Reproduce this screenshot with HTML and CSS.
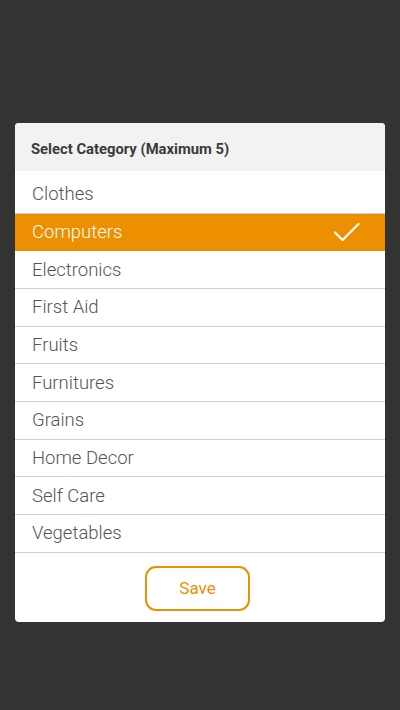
FILE: index.html
```html
<!DOCTYPE html>
<html>
<head>
<meta charset="utf-8">
<link rel="stylesheet" href="styles.css">
</head>
<body>
<div class="screen">
  <div class="dialog">
    <div class="header">Select Category (Maximum 5)</div>
    <ul class="list">
      <li class="item">Clothes</li>
      <li class="item selected">Computers
        <svg class="check" width="26" height="20" viewBox="0 0 26 20"><path d="M1 10.5 L8.5 18 L24.5 2" fill="none" stroke="#fff" stroke-width="2.2" stroke-linecap="round" stroke-linejoin="round"/></svg>
      </li>
      <li class="item">Electronics</li>
      <li class="item">First Aid</li>
      <li class="item">Fruits</li>
      <li class="item">Furnitures</li>
      <li class="item">Grains</li>
      <li class="item">Home Decor</li>
      <li class="item">Self Care</li>
      <li class="item">Vegetables</li>
    </ul>
    <div class="footer">
      <button class="save">Save</button>
    </div>
  </div>
</div>
</body>
</html>
```
FILE: styles.css
```css
html, body {
  margin: 0;
  padding: 0;
  background: #333333;
  font-family: Roboto, "Liberation Sans", sans-serif;
}
.screen {
  width: 400px;
  height: 710px;
  display: flex;
  flex-direction: column;
  align-items: center;
  padding-top: 123px;
  box-sizing: border-box;
}
.dialog {
  width: 370px;
  background: #ffffff;
  border-radius: 4px;
  overflow: hidden;
}
.header {
  background: #f2f2f2;
  height: 48px;
  box-sizing: border-box;
  padding-top: 3px;
  display: flex;
  align-items: center;
  padding-left: 16px;
  font-size: 14.8px;
  font-weight: 700;
  color: #3a3a3a;
}
.list {
  list-style: none;
  margin: 0;
  padding: 5px 0 0 0;
}
.item {
  height: 36.67px;
  border-bottom: 1px solid #cfcfcf;
  display: flex;
  align-items: center;
  justify-content: space-between;
  padding: 0 25px 0 17px;
  font-size: 18.5px;
  font-weight: 300;
  color: #555555;
}
.item.selected {
  background: #ec8f00;
  color: #ffffff;
  border-bottom-color: #ec8f00;
}
.check {
  display: block;
}
.footer {
  height: 69px;
  display: flex;
  align-items: center;
  justify-content: center;
  padding-right: 5px;
}
.save {
  width: 105px;
  height: 45px;
  margin-top: 2px;
  border: 2px solid #ec8f00;
  border-radius: 11px;
  background: #ffffff;
  color: #ec8f00;
  font-family: Roboto, "Liberation Sans", sans-serif;
  font-size: 17px;
  font-weight: 400;
  padding: 0;
}
```
